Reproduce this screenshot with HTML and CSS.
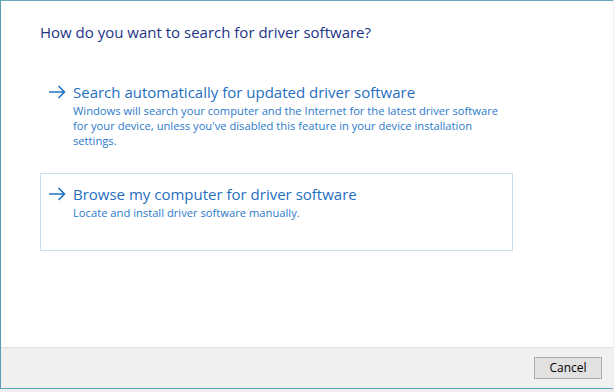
FILE: index.html
```html
<!DOCTYPE html>
<html>
<head>
<meta charset="utf-8">
<link rel="stylesheet" href="styles.css">
</head>
<body>
<div class="dialog">
  <div class="content">
    <div class="instruction">How do you want to search for driver software?</div>
    <div class="options">
      <div class="option option-first">
        <svg class="arrow" width="18" height="14" viewBox="0 0 18 14"><path d="M1 7 H16.5 M10.5 1 L16.5 7 L10.5 13" fill="none" stroke="#1f73c4" stroke-width="1.6"/></svg>
        <div class="option-text">
          <div class="option-title">Search automatically for updated driver software</div>
          <div class="option-desc">Windows will search your computer and the Internet for the latest driver software for your device, unless you've disabled this feature in your device installation settings.</div>
        </div>
      </div>
      <div class="option option-focus">
        <svg class="arrow" width="18" height="14" viewBox="0 0 18 14"><path d="M1 7 H16.5 M10.5 1 L16.5 7 L10.5 13" fill="none" stroke="#1f73c4" stroke-width="1.6"/></svg>
        <div class="option-text">
          <div class="option-title">Browse my computer for driver software</div>
          <div class="option-desc">Locate and install driver software manually.</div>
        </div>
      </div>
    </div>
  </div>
  <div class="footer">
    <button class="btn">Cancel</button>
  </div>
</div>
</body>
</html>
```
FILE: styles.css
```css
html, body {
  margin: 0;
  padding: 0;
}
body {
  background: #efedf0;
  font-family: "Open Sans", "Noto Sans", sans-serif;
  width: 614px;
  height: 392px;
  overflow: hidden;
}
.dialog {
  width: 613px;
  height: 389px;
  box-sizing: border-box;
  background: #ffffff;
  border-left: 1px solid #5d9bb2;
  border-top: 1px solid #6aa6bd;
  border-bottom: 1px solid #58a9b9;
  display: flex;
  flex-direction: column;
}
.content {
  flex: 1;
  padding: 21px 0 0 39px;
}
.instruction {
  font-size: 15px;
  line-height: 20px;
  color: #1c3486;
}
.options {
  margin-top: 29px;
  display: flex;
  flex-direction: column;
  gap: 8px;
}
.option {
  width: 473px;
  box-sizing: border-box;
  border: 1px solid transparent;
  padding: 10px 0 0 7px;
  display: flex;
  align-items: flex-start;
}
.option-first {
  height: 94px;
}
.option-focus {
  height: 78px;
  border-color: #c9dfec;
}
.arrow {
  margin-top: 3px;
  flex: none;
}
.option-text {
  margin-left: 7px;
}
.option-title {
  font-size: 15px;
  line-height: 20px;
  color: #1f6fbf;
}
.option-desc {
  font-size: 11.2px;
  line-height: 15px;
  margin-top: 1px;
  color: #2b7acb;
  width: 432px;
}
.footer {
  height: 41px;
  box-sizing: border-box;
  background: #f0f0f0;
  border-top: 1px solid #dfdfdf;
  display: flex;
  justify-content: flex-end;
  align-items: flex-start;
  padding: 9px 11px 0 0;
}
.btn {
  width: 68px;
  height: 22px;
  box-sizing: border-box;
  border: 1px solid #adadad;
  background: #e1e1e1;
  font-family: "Open Sans", "Noto Sans", sans-serif;
  font-size: 12px;
  color: #000;
  padding: 0;
  line-height: 18px;
}
```
